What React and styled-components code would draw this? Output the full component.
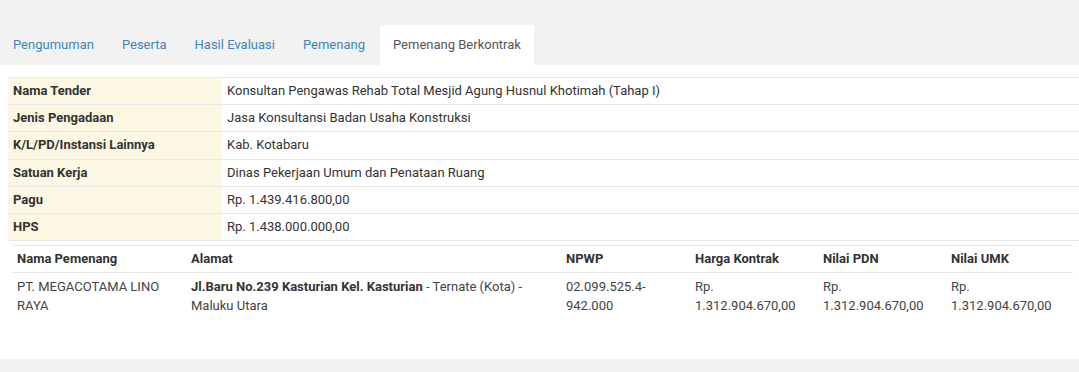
import React from "react";
import styled, { createGlobalStyle } from "styled-components";

const GlobalStyle = createGlobalStyle`
  html, body { margin: 0; padding: 0; }
  body {
    background: #f2f2f2;
    font-family: Roboto, "Liberation Sans", Arial, sans-serif;
    font-size: 13px;
    color: #333;
  }
`;

const Page = styled.div`
  padding-top: 25px;
  min-height: 347px;
`;

const TabBar = styled.ul`
  display: flex;
  list-style: none;
  margin: 0;
  padding: 0;
  height: 40px;
`;

const Tab = styled.li`
  padding: 0 13px;
  margin-right: 2px;
  line-height: 40px;
  font-size: 13px;
  color: ${(p) => (p.$active ? "#555" : "#3a87bd")};
  background: ${(p) => (p.$active ? "#fff" : "transparent")};
  cursor: pointer;
  white-space: nowrap;
`;

const Panel = styled.div`
  background: #fff;
  padding: 12px 0 39px 8px;
`;

const InfoTable = styled.table`
  width: 100%;
  border-collapse: collapse;
  table-layout: fixed;
`;

const InfoRow = styled.tr`
  border-top: 1px solid #e9e9e9;
  &:last-child { border-bottom: 1px solid #e9e9e9; }
`;

const KeyCell = styled.th`
  box-sizing: border-box;
  width: 214px;
  text-align: left;
  font-weight: 700;
  background: #fcf8e3;
  padding: 5px;
  line-height: 16.2px;
  color: #333;
`;

const ValueCell = styled.td`
  padding: 5px;
  line-height: 16.2px;
  color: #333;
`;

const WinnerTable = styled.table`
  width: 1061px;
  margin: 4px 0 0 4px;
  border-collapse: collapse;
  table-layout: fixed;
`;

const HeadRow = styled.tr`
  border-top: 1px solid #e9e9e9;
  border-bottom: 1px solid #e9e9e9;
`;

const HeadCell = styled.th`
  text-align: left;
  font-weight: 700;
  padding: 5px;
  line-height: 16px;
  color: #333;
`;

const DataCell = styled.td`
  vertical-align: top;
  padding: 4px 5px 5px;
  line-height: 19px;
  color: #444;
`;

const Strong = styled.b`
  font-weight: 700;
  color: #333;
`;

const tabs = ["Pengumuman", "Peserta", "Hasil Evaluasi", "Pemenang", "Pemenang Berkontrak"];

const info = [
  ["Nama Tender", "Konsultan Pengawas Rehab Total Mesjid Agung Husnul Khotimah (Tahap I)"],
  ["Jenis Pengadaan", "Jasa Konsultansi Badan Usaha Konstruksi"],
  ["K/L/PD/Instansi Lainnya", "Kab. Kotabaru"],
  ["Satuan Kerja", "Dinas Pekerjaan Umum dan Penataan Ruang"],
  ["Pagu", "Rp. 1.439.416.800,00"],
  ["HPS", "Rp. 1.438.000.000,00"],
];

const cols = [
  ["Nama Pemenang", 174],
  ["Alamat", 375],
  ["NPWP", 129],
  ["Harga Kontrak", 128],
  ["Nilai PDN", 128],
  ["Nilai UMK", 127],
];

export default function App() {
  return (
    <>
      <GlobalStyle />
      <Page>
        <TabBar>
          {tabs.map((t, i) => (
            <Tab key={t} $active={i === tabs.length - 1}>{t}</Tab>
          ))}
        </TabBar>
        <Panel>
          <InfoTable>
            <tbody>
              {info.map(([k, v]) => (
                <InfoRow key={k}>
                  <KeyCell>{k}</KeyCell>
                  <ValueCell>{v}</ValueCell>
                </InfoRow>
              ))}
            </tbody>
          </InfoTable>
          <WinnerTable>
            <colgroup>
              {cols.map(([n, w]) => (
                <col key={n} style={{ width: w }} />
              ))}
            </colgroup>
            <thead>
              <HeadRow>
                {cols.map(([n]) => (
                  <HeadCell key={n}>{n}</HeadCell>
                ))}
              </HeadRow>
            </thead>
            <tbody>
              <tr>
                <DataCell>PT. MEGACOTAMA LINO RAYA</DataCell>
                <DataCell>
                  <Strong>Jl.Baru No.239 Kasturian Kel. Kasturian</Strong> - Ternate (Kota) - Maluku Utara
                </DataCell>
                <DataCell>02.099.525.4-942.000</DataCell>
                <DataCell>Rp. 1.312.904.670,00</DataCell>
                <DataCell>Rp. 1.312.904.670,00</DataCell>
                <DataCell>Rp. 1.312.904.670,00</DataCell>
              </tr>
            </tbody>
          </WinnerTable>
        </Panel>
      </Page>
    </>
  );
}
